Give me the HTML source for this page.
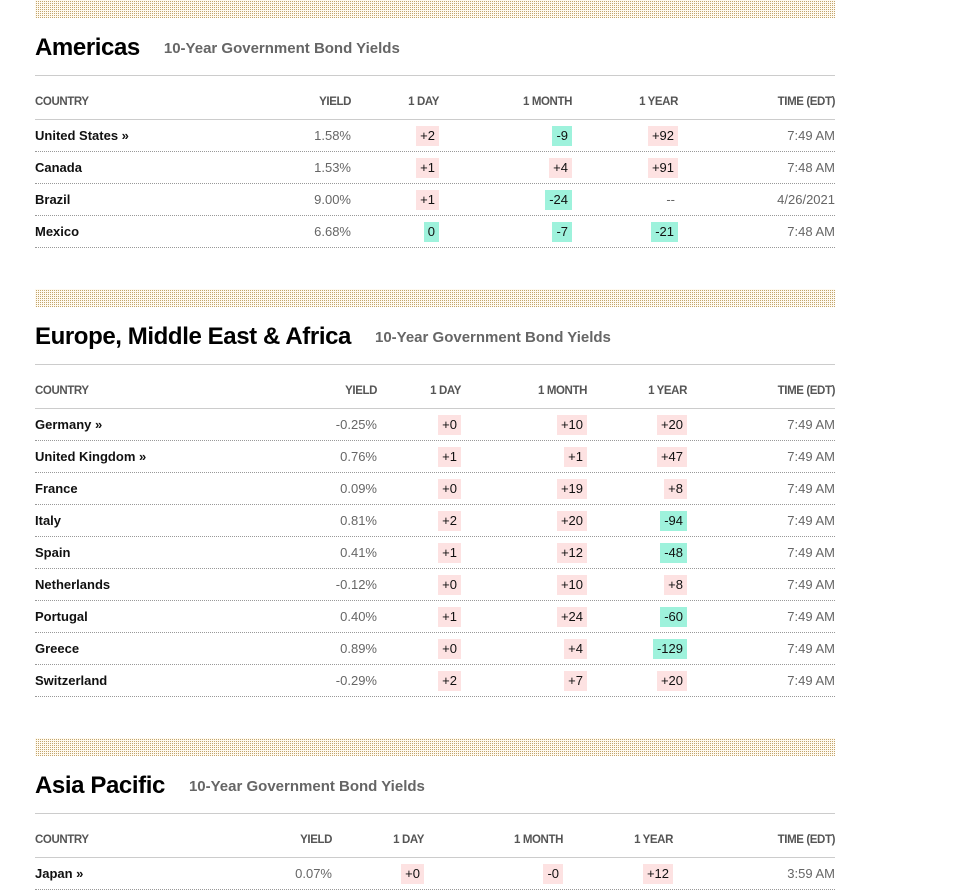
<!DOCTYPE html>
<html><head><meta charset="utf-8"><style>
*{margin:0;padding:0;box-sizing:border-box}
body{width:970px;height:893px;background:#fff;position:relative;overflow:hidden;font-family:"Liberation Sans",Arial,sans-serif;color:#111}
.band{position:absolute;left:35px;width:800px;height:18px;background-color:#fffaf0;background-image:linear-gradient(90deg,#fffaf0 50%,transparent 50%),linear-gradient(#fffaf0 50%,#c2a56c 50%);background-size:2px 2px}
.title{position:absolute;left:35px;font-size:24px;font-weight:bold;letter-spacing:-0.4px;color:#000;line-height:30px}
.sub{font-size:15px;font-weight:bold;color:#666;letter-spacing:0;margin-left:24px;vertical-align:2px}
.hr{position:absolute;left:35px;width:800px;border-top:1px solid #ccc}
.hdr{position:absolute;left:35px;width:800px;height:18px;font-size:11.5px;font-weight:bold;color:#555;line-height:18px;letter-spacing:-0.4px}
.row{position:absolute;left:35px;width:800px;height:32px;border-bottom:1px dotted #999;font-size:13px;line-height:32px}
.c{position:absolute;top:0;white-space:nowrap}
.n{font-weight:bold;left:0;color:#111}
.g{color:#666}
.b{display:inline-block;line-height:20px;padding:0 4px;color:#111}
.p{background:#fde2e2}
.m{background:#9ef2dc}
</style></head><body>

<div class="band" style="top:0"></div>
<div class="title" style="top:33px">Americas<span class="sub">10-Year Government Bond Yields</span></div>
<div class="hr" style="top:75px"></div>
<div class="hdr" style="top:93px"><span class="c" style="left:0">COUNTRY</span><span class="c" style="right:484px">YIELD</span><span class="c" style="right:396px">1 DAY</span><span class="c" style="right:263px">1 MONTH</span><span class="c" style="right:157px">1 YEAR</span><span class="c" style="right:0">TIME (EDT)</span></div>
<div class="hr" style="top:119px"></div>
<div class="row" style="top:120px"><span class="c n">United States »</span><span class="c g" style="right:484px">1.58%</span><span class="c" style="right:396px"><span class="b p">+2</span></span><span class="c" style="right:263px"><span class="b m">-9</span></span><span class="c" style="right:157px"><span class="b p">+92</span></span><span class="c g" style="right:0">7:49 AM</span></div>
<div class="row" style="top:152px"><span class="c n">Canada</span><span class="c g" style="right:484px">1.53%</span><span class="c" style="right:396px"><span class="b p">+1</span></span><span class="c" style="right:263px"><span class="b p">+4</span></span><span class="c" style="right:157px"><span class="b p">+91</span></span><span class="c g" style="right:0">7:48 AM</span></div>
<div class="row" style="top:184px"><span class="c n">Brazil</span><span class="c g" style="right:484px">9.00%</span><span class="c" style="right:396px"><span class="b p">+1</span></span><span class="c" style="right:263px"><span class="b m">-24</span></span><span class="c g" style="right:160px">--</span><span class="c g" style="right:0">4/26/2021</span></div>
<div class="row" style="top:216px"><span class="c n">Mexico</span><span class="c g" style="right:484px">6.68%</span><span class="c" style="right:396px"><span class="b m">0</span></span><span class="c" style="right:263px"><span class="b m">-7</span></span><span class="c" style="right:157px"><span class="b m">-21</span></span><span class="c g" style="right:0">7:48 AM</span></div>

<div class="band" style="top:289px"></div>
<div class="title" style="top:322px">Europe, Middle East &amp; Africa<span class="sub">10-Year Government Bond Yields</span></div>
<div class="hr" style="top:364px"></div>
<div class="hdr" style="top:382px"><span class="c" style="left:0">COUNTRY</span><span class="c" style="right:458px">YIELD</span><span class="c" style="right:374px">1 DAY</span><span class="c" style="right:248px">1 MONTH</span><span class="c" style="right:148px">1 YEAR</span><span class="c" style="right:0">TIME (EDT)</span></div>
<div class="hr" style="top:408px"></div>
<div class="row" style="top:409px"><span class="c n">Germany »</span><span class="c g" style="right:458px">-0.25%</span><span class="c" style="right:374px"><span class="b p">+0</span></span><span class="c" style="right:248px"><span class="b p">+10</span></span><span class="c" style="right:148px"><span class="b p">+20</span></span><span class="c g" style="right:0">7:49 AM</span></div>
<div class="row" style="top:441px"><span class="c n">United Kingdom »</span><span class="c g" style="right:458px">0.76%</span><span class="c" style="right:374px"><span class="b p">+1</span></span><span class="c" style="right:248px"><span class="b p">+1</span></span><span class="c" style="right:148px"><span class="b p">+47</span></span><span class="c g" style="right:0">7:49 AM</span></div>
<div class="row" style="top:473px"><span class="c n">France</span><span class="c g" style="right:458px">0.09%</span><span class="c" style="right:374px"><span class="b p">+0</span></span><span class="c" style="right:248px"><span class="b p">+19</span></span><span class="c" style="right:148px"><span class="b p">+8</span></span><span class="c g" style="right:0">7:49 AM</span></div>
<div class="row" style="top:505px"><span class="c n">Italy</span><span class="c g" style="right:458px">0.81%</span><span class="c" style="right:374px"><span class="b p">+2</span></span><span class="c" style="right:248px"><span class="b p">+20</span></span><span class="c" style="right:148px"><span class="b m">-94</span></span><span class="c g" style="right:0">7:49 AM</span></div>
<div class="row" style="top:537px"><span class="c n">Spain</span><span class="c g" style="right:458px">0.41%</span><span class="c" style="right:374px"><span class="b p">+1</span></span><span class="c" style="right:248px"><span class="b p">+12</span></span><span class="c" style="right:148px"><span class="b m">-48</span></span><span class="c g" style="right:0">7:49 AM</span></div>
<div class="row" style="top:569px"><span class="c n">Netherlands</span><span class="c g" style="right:458px">-0.12%</span><span class="c" style="right:374px"><span class="b p">+0</span></span><span class="c" style="right:248px"><span class="b p">+10</span></span><span class="c" style="right:148px"><span class="b p">+8</span></span><span class="c g" style="right:0">7:49 AM</span></div>
<div class="row" style="top:601px"><span class="c n">Portugal</span><span class="c g" style="right:458px">0.40%</span><span class="c" style="right:374px"><span class="b p">+1</span></span><span class="c" style="right:248px"><span class="b p">+24</span></span><span class="c" style="right:148px"><span class="b m">-60</span></span><span class="c g" style="right:0">7:49 AM</span></div>
<div class="row" style="top:633px"><span class="c n">Greece</span><span class="c g" style="right:458px">0.89%</span><span class="c" style="right:374px"><span class="b p">+0</span></span><span class="c" style="right:248px"><span class="b p">+4</span></span><span class="c" style="right:148px"><span class="b m">-129</span></span><span class="c g" style="right:0">7:49 AM</span></div>
<div class="row" style="top:665px"><span class="c n">Switzerland</span><span class="c g" style="right:458px">-0.29%</span><span class="c" style="right:374px"><span class="b p">+2</span></span><span class="c" style="right:248px"><span class="b p">+7</span></span><span class="c" style="right:148px"><span class="b p">+20</span></span><span class="c g" style="right:0">7:49 AM</span></div>

<div class="band" style="top:738px"></div>
<div class="title" style="top:771px">Asia Pacific<span class="sub">10-Year Government Bond Yields</span></div>
<div class="hr" style="top:813px"></div>
<div class="hdr" style="top:831px"><span class="c" style="left:0">COUNTRY</span><span class="c" style="right:503px">YIELD</span><span class="c" style="right:411px">1 DAY</span><span class="c" style="right:272px">1 MONTH</span><span class="c" style="right:162px">1 YEAR</span><span class="c" style="right:0">TIME (EDT)</span></div>
<div class="hr" style="top:857px"></div>
<div class="row" style="top:858px"><span class="c n">Japan »</span><span class="c g" style="right:503px">0.07%</span><span class="c" style="right:411px"><span class="b p">+0</span></span><span class="c" style="right:272px"><span class="b p">-0</span></span><span class="c" style="right:162px"><span class="b p">+12</span></span><span class="c g" style="right:0">3:59 AM</span></div>

</body></html>
